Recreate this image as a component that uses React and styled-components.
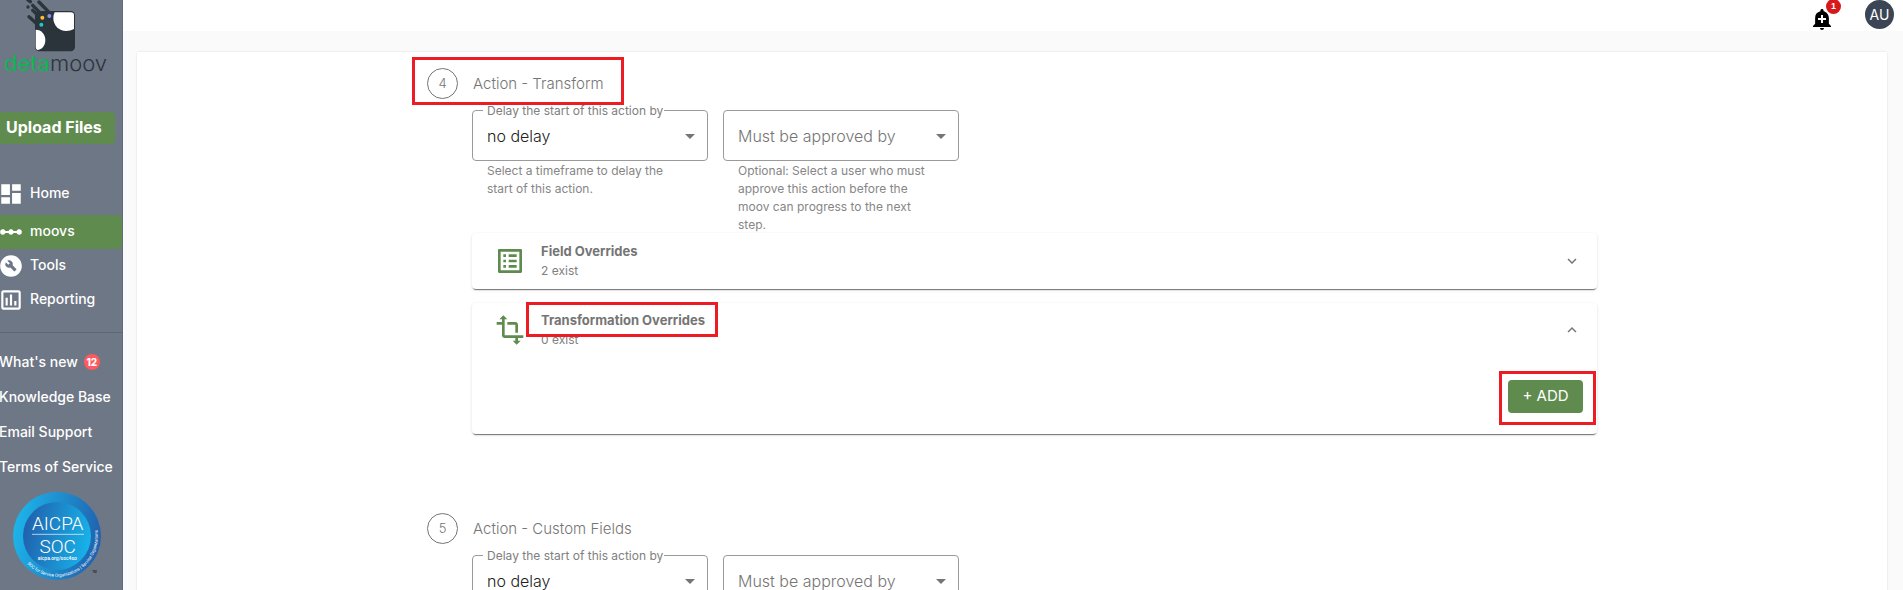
import React from "react";
import styled, { createGlobalStyle } from "styled-components";
import {
  MdAddAlert,
  MdBuildCircle,
  MdDashboard,
  MdExpandLess,
  MdExpandMore,
  MdLinearScale,
  MdListAlt,
  MdOutlineAssessment,
  MdTransform,
} from "react-icons/md";

const GlobalStyle = createGlobalStyle`
  * {
    box-sizing: border-box;
  }

  body {
    margin: 0;
    background: #fafafa;
    color: #757575;
    font-family: Inter, "Open Sans", sans-serif;
    overflow: hidden;
  }
`;

const Layout = styled.div`
  display: flex;
  height: 100vh;
  overflow: hidden;
`;

const Sidebar = styled.aside`
  flex: none;
  width: 123px;
  background: #6e7786;
  border-right: 1px solid #626b79;
  overflow: hidden;
`;

const Brand = styled.div`
  height: 112px;
  padding-left: 4px;
`;

const BrandMark = styled.svg`
  display: block;
  width: 80px;
  height: 52px;
`;

const BrandName = styled.div`
  color: #2b343b;
  font-size: 22px;
  font-weight: 300;
  line-height: 22px;
`;

const BrandAccent = styled.span`
  color: #0bb552;
  font-weight: 400;
`;

const UploadButton = styled.button`
  display: block;
  width: 115px;
  height: 32px;
  margin-bottom: 33px;
  padding: 0 0 2px 6px;
  border: 0;
  border-radius: 0 4px 4px 0;
  background: #5f8b4f;
  color: #fff;
  font-family: inherit;
  font-size: 16px;
  font-weight: 700;
  text-align: left;
  white-space: nowrap;
`;

const Nav = styled.nav`
  padding-bottom: 15px;
  border-bottom: 1px solid #5d6674;
`;

const NavLink = styled.a`
  display: flex;
  align-items: center;
  gap: 6px;
  height: 34px;
  border-radius: 0 4px 4px 0;
  background: ${(props) => (props.$active ? "#5f8b4f" : "transparent")};
  color: #fff;
  font-size: 14px;
  font-weight: 500;
  text-decoration: none;

  &:first-child {
    margin-bottom: 4px;
  }

  svg {
    flex: none;
    width: 26px;
    height: 26px;
    margin-left: -2px;
  }
`;

const NavLabel = styled.span`
  padding-bottom: 3px;
`;

const Links = styled.div`
  padding-top: 11px;
`;

const SideLink = styled.a`
  display: flex;
  align-items: center;
  gap: 6px;
  height: 35px;
  margin-left: -1px;
  color: #fff;
  font-size: 14px;
  font-weight: 500;
  text-decoration: none;
  white-space: nowrap;
`;

const NewCount = styled.span`
  width: 16px;
  height: 16px;
  border-radius: 50%;
  background: #ff5a5f;
  font-size: 10px;
  font-weight: 800;
  line-height: 16px;
  text-align: center;
`;

const SocBadge = styled.svg`
  display: block;
  width: 100px;
  height: 90px;
  margin: 7px 0 0 12px;
`;

const Page = styled.div`
  flex: 1;
  display: flex;
  flex-direction: column;
  min-width: 0;
`;

const TopBar = styled.header`
  flex: none;
  display: flex;
  justify-content: flex-end;
  gap: 31px;
  height: 31px;
  padding-right: 9px;
  background: #fff;
`;

const BellButton = styled.button`
  position: relative;
  width: 24px;
  height: 31px;
  padding: 7px 0 0;
  border: 0;
  background: none;
  color: #000;

  svg {
    display: block;
    width: 24px;
    height: 24px;
  }
`;

const BellCount = styled.span`
  position: absolute;
  top: -1px;
  right: -7px;
  width: 15px;
  height: 15px;
  border-radius: 50%;
  background: #d7191c;
  color: #fff;
  font-size: 9px;
  font-weight: 600;
  line-height: 15px;
  text-align: center;
`;

const Avatar = styled.button`
  width: 29px;
  height: 29px;
  padding: 0;
  border: 0;
  border-radius: 50%;
  background: #3c4555;
  color: #fff;
  font-family: inherit;
  font-size: 14px;
`;

const Panel = styled.main`
  flex: 1;
  margin: 21px 16px 0 14px;
  padding: 16px 24px 0;
  background: #fff;
  box-shadow: 0 0 2px rgba(0, 0, 0, 0.12);
`;

const Steps = styled.div`
  max-width: 1170px;
  margin: 0 auto;
`;

const StepSection = styled.section`
  margin-bottom: 79px;
`;

const StepHeader = styled.div`
  position: relative;
  display: inline-flex;
  align-items: center;
  gap: 15px;
  height: 31px;
`;

const StepNumber = styled.span`
  width: 31px;
  height: 31px;
  border: 1px solid #757575;
  border-radius: 50%;
  font-size: 13px;
  font-weight: 300;
  line-height: 29px;
  text-align: center;
`;

const StepTitle = styled.h2`
  margin: 0;
  font-size: 15px;
  font-weight: 300;
`;

const StepBody = styled.div`
  padding: 11px 0 0 45px;
`;

/* red frame drawn over the element it is placed in */
const Callout = styled.span`
  position: absolute;
  inset: ${(props) => props.$inset};
  z-index: 1;
  border: 3px solid #ed1c24;
  pointer-events: none;
`;

const Fields = styled.div`
  display: flex;
  gap: 15px;
  height: 123px;
`;

const Field = styled.div`
  position: relative;
  width: 236px;
`;

const FieldLabel = styled.label`
  position: absolute;
  top: -8px;
  left: 11px;
  width: 181px;
  padding-left: 4px;
  overflow: hidden;
  background: #fff;
  color: #808080;
  font-size: 12px;
  line-height: 18px;
  white-space: nowrap;
`;

const Select = styled.select`
  display: block;
  width: 100%;
  height: 51px;
  padding: 0 40px 0 14px;
  border: 1px solid #9a9a9a;
  border-radius: 4px;
  appearance: none;
  background: transparent;
  color: ${(props) => (props.$empty ? "#757575" : "#212121")};
  font-family: inherit;
  font-size: 16px;
  font-weight: 300;
`;

const Caret = styled.span`
  position: absolute;
  top: 24px;
  right: 13px;
  border: 5px solid transparent;
  border-top: 5px solid #757575;
  border-bottom: 0;
  pointer-events: none;
`;

const Helper = styled.p`
  margin: 1px 30px 0 15px;
  color: #868686;
  font-size: 12px;
  line-height: 18px;
`;

const Accordion = styled.section`
  min-height: 56px;
  margin-bottom: 14px;
  border-radius: 4px;
  background: #fff;
  box-shadow: 0 2px 1px -1px rgba(0, 0, 0, 0.5), 0 1px 3px rgba(0, 0, 0, 0.14);
`;

const AccordionHeader = styled.button`
  display: flex;
  align-items: center;
  width: 100%;
  height: ${(props) => (props.$open ? "54px" : "56px")};
  padding: 0 16px 0 22px;
  border: 0;
  background: none;
  color: #757575;
  font-family: inherit;
  text-align: left;
`;

const AccordionIcon = styled.span`
  display: flex;
  margin-right: 15px;
  color: #5f8b4f;

  svg {
    width: 32px;
    height: 32px;
  }
`;

const AccordionText = styled.span`
  flex: 1;
  display: flex;
  flex-direction: column;
  align-items: flex-start;
`;

const AccordionTitle = styled.span`
  position: relative;
  font-size: 13px;
  font-weight: 700;
  line-height: 20px;
`;

const AccordionCount = styled.span`
  color: #808080;
  font-size: 12px;
  line-height: 20px;
`;

const Chevron = styled.span`
  display: flex;

  svg {
    width: 18px;
    height: 18px;
  }
`;

const AccordionActions = styled.div`
  display: flex;
  justify-content: flex-end;
  padding: 23px 14px 21px;
`;

const AddWrapper = styled.div`
  position: relative;
`;

const AddButton = styled.button`
  display: block;
  width: 75px;
  height: 33px;
  padding: 0 0 2px;
  border: 0;
  border-radius: 4px;
  background: #5f8b4f;
  color: #fff;
  font-family: inherit;
  font-size: 15px;
`;

const Logo = () => (
  <BrandMark viewBox="12 0 240 156" aria-hidden="true">
    <rect x="105" y="33" width="120" height="121" rx="13" fill="#2b343b" />
    <path
      d="M164 37H212Q222 37 222 47V87Q211 93 199 93C176 93 160 76 160 54Q160 44 164 37Z"
      fill="#fff"
    />
    <path
      d="M107 89C125 89 136 104 136 120C136 137 126 149 112 150Q107 147 107 141Z"
      fill="#fff"
    />
    <g stroke="#2b343b" strokeWidth="10" strokeLinecap="round">
      <path d="M117 6L148 38" />
      <path d="M98 16L128 46" />
      <path d="M84 0L91 5" />
      <path d="M84 21L84 21" />
      <path d="M98 31L124 56" />
      <path d="M87 50L112 73" />
    </g>
    <circle cx="148" cy="48" r="6" fill="#8c8cf0" />
    <circle cx="127" cy="53" r="6" fill="#fbc02d" />
    <circle cx="124" cy="74" r="6" fill="#1cc8c8" />
  </BrandMark>
);

const AicpaBadge = () => (
  <SocBadge viewBox="36 33 300 270" role="img" aria-label="AICPA SOC">
    <defs>
      <linearGradient id="ring" x1="0" y1="0.4" x2="1" y2="0.6">
        <stop offset="0" stopColor="#1cb5ea" />
        <stop offset="1" stopColor="#2160ad" />
      </linearGradient>
      <linearGradient id="disc" x1="0" y1="0.4" x2="1" y2="0.6">
        <stop offset="0" stopColor="#2160ad" />
        <stop offset="1" stopColor="#17b4ea" />
      </linearGradient>
      <path id="rim" d="M82 251A122 122 0 0 0 286 126" />
    </defs>
    <circle cx="171" cy="168" r="132" fill="url(#ring)" />
    <circle cx="171" cy="168" r="102" fill="url(#disc)" />
    <g fill="#fff" fontFamily="Roboto, sans-serif" textAnchor="middle">
      <text x="173" y="150" fontSize="57" fontWeight="300">
        AICPA
      </text>
      <path d="M96 163H252" stroke="#fff" strokeWidth="2" />
      <text x="173" y="218" fontSize="57" fontWeight="300">
        SOC
      </text>
      <text x="172" y="241" fontSize="15" fontWeight="500">
        aicpa.org/soc4so
      </text>
    </g>
    <text fill="#fff" fontFamily="Roboto, sans-serif" fontSize="13">
      <textPath href="#rim">
        SOC for Service Organizations | Service Organizations
      </textPath>
    </text>
    <text x="277" y="278" fontFamily="Roboto, sans-serif" fontSize="9">
      TM
    </text>
  </SocBadge>
);

const navItems = [
  { label: "Home", icon: <MdDashboard /> },
  { label: "moovs", icon: <MdLinearScale />, active: true },
  { label: "Tools", icon: <MdBuildCircle /> },
  { label: "Reporting", icon: <MdOutlineAssessment /> },
];

const Step = ({ number, title, highlighted, children }) => {
  return (
    <StepSection>
      <StepHeader>
        <StepNumber>{number}</StepNumber>
        <StepTitle>{title}</StepTitle>
        {highlighted && <Callout $inset="-11px -20px -6px -15px" />}
      </StepHeader>
      <StepBody>
        <Fields>
          <Field>
            <Select id={`delay-${number}`}>
              <option>no delay</option>
            </Select>
            <FieldLabel htmlFor={`delay-${number}`}>
              Delay the start of this action by
            </FieldLabel>
            <Caret />
            <Helper>Select a timeframe to delay the start of this action.</Helper>
          </Field>
          <Field>
            <Select $empty aria-label="Must be approved by">
              <option>Must be approved by</option>
            </Select>
            <Caret />
            <Helper>
              Optional: Select a user who must approve this action before the
              moov can progress to the next step.
            </Helper>
          </Field>
        </Fields>
        {children}
      </StepBody>
    </StepSection>
  );
};

const Override = ({ icon, title, count, open, highlighted, children }) => {
  return (
    <Accordion>
      <AccordionHeader $open={open} aria-expanded={Boolean(open)}>
        <AccordionIcon>{icon}</AccordionIcon>
        <AccordionText>
          <AccordionTitle>
            {title}
            {highlighted && <Callout $inset="-8px -13px -7px -15px" />}
          </AccordionTitle>
          <AccordionCount>{count} exist</AccordionCount>
        </AccordionText>
        <Chevron>{open ? <MdExpandLess /> : <MdExpandMore />}</Chevron>
      </AccordionHeader>
      {children}
    </Accordion>
  );
};

const App = () => {
  return (
    <Layout>
      <GlobalStyle />
      <Sidebar>
        <Brand>
          <Logo />
          <BrandName>
            <BrandAccent>deta</BrandAccent>moov
          </BrandName>
        </Brand>
        <UploadButton>Upload Files</UploadButton>
        <Nav>
          {navItems.map((item) => (
            <NavLink key={item.label} href="#" $active={item.active}>
              {item.icon}
              <NavLabel>{item.label}</NavLabel>
            </NavLink>
          ))}
        </Nav>
        <Links>
          <SideLink href="#">
            What's new <NewCount>12</NewCount>
          </SideLink>
          <SideLink href="#">Knowledge Base</SideLink>
          <SideLink href="#">Email Support</SideLink>
          <SideLink href="#">Terms of Service</SideLink>
        </Links>
        <AicpaBadge />
      </Sidebar>
      <Page>
        <TopBar>
          <BellButton aria-label="Notifications">
            <MdAddAlert />
            <BellCount>1</BellCount>
          </BellButton>
          <Avatar>AU</Avatar>
        </TopBar>
        <Panel>
          <Steps>
            <Step number={4} title="Action - Transform" highlighted>
              <Override icon={<MdListAlt />} title="Field Overrides" count={2} />
              <Override
                icon={<MdTransform />}
                title="Transformation Overrides"
                count={0}
                open
                highlighted
              >
                <AccordionActions>
                  <AddWrapper>
                    <AddButton>+ ADD</AddButton>
                    <Callout $inset="-9px -13px -12px -9px" />
                  </AddWrapper>
                </AccordionActions>
              </Override>
            </Step>
            <Step number={5} title="Action - Custom Fields" />
          </Steps>
        </Panel>
      </Page>
    </Layout>
  );
};

export default App;
